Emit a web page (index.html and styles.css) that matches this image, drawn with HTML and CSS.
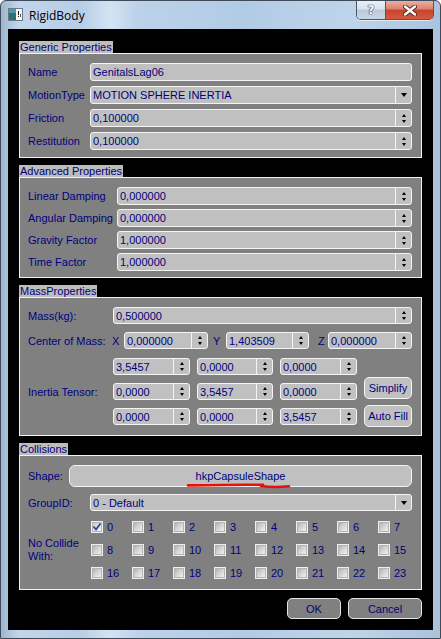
FILE: index.html
```html
<!DOCTYPE html>
<html lang="en">
<head>
  <meta charset="UTF-8">
  <title>RigidBody</title>
  <link rel="stylesheet" href="styles.css">
</head>
<body>
  <div class="window">
    <div class="titlebar">
      <svg class="app-icon" width="15" height="13" viewBox="0 0 15 13">
        <rect x="0.5" y="0.5" width="14" height="12" fill="#f4f6f8" stroke="#6d7884"/>
        <rect x="1" y="1" width="7" height="11" fill="#2f6f7a"/>
        <rect x="1" y="1" width="7" height="4" fill="#4f98a6"/>
        <rect x="10" y="3" width="1" height="4" fill="#222"/>
        <rect x="10" y="8" width="1" height="1" fill="#222"/>
        <rect x="12" y="6" width="1" height="3" fill="#555"/>
      </svg>
      <span class="caption">RigidBody</span>
      <div class="caption-buttons">
        <span class="cap-btn help">?</span>
        <span class="cap-btn close">
          <svg width="14" height="11" viewBox="0 0 14 11">
            <path d="M2 1.5 L12 9.5 M12 1.5 L2 9.5" stroke="#4a2620" stroke-width="4.2" stroke-linecap="round"/>
            <path d="M2 1.5 L12 9.5 M12 1.5 L2 9.5" stroke="#fff" stroke-width="2.4" stroke-linecap="round"/>
          </svg>
        </span>
      </div>
    </div>

    <div class="client">
      <!-- Generic -->
      <section class="group">
        <h4 class="group-title">Generic Properties</h4>
        <div class="group-box generic">
          <div class="row">
            <label>Name</label>
            <div class="field tall">GenitalsLag06</div>
          </div>
          <div class="row">
            <label>MotionType</label>
            <div class="field combo"><span class="val">MOTION SPHERE INERTIA</span><span class="drop"><i class="tri-down"></i></span></div>
          </div>
          <div class="row">
            <label>Friction</label>
            <div class="field spin"><span class="val">0,100000</span><span class="arrows"><i class="up"></i><i class="down"></i></span></div>
          </div>
          <div class="row">
            <label>Restitution</label>
            <div class="field spin"><span class="val">0,100000</span><span class="arrows"><i class="up"></i><i class="down"></i></span></div>
          </div>
        </div>
      </section>

      <!-- Advanced -->
      <section class="group">
        <h4 class="group-title">Advanced Properties</h4>
        <div class="group-box advanced">
          <div class="row">
            <label>Linear Damping</label>
            <div class="field spin"><span class="val">0,000000</span><span class="arrows"><i class="up"></i><i class="down"></i></span></div>
          </div>
          <div class="row">
            <label>Angular Damping</label>
            <div class="field spin"><span class="val">0,000000</span><span class="arrows"><i class="up"></i><i class="down"></i></span></div>
          </div>
          <div class="row">
            <label>Gravity Factor</label>
            <div class="field spin"><span class="val">1,000000</span><span class="arrows"><i class="up"></i><i class="down"></i></span></div>
          </div>
          <div class="row">
            <label>Time Factor</label>
            <div class="field spin"><span class="val">1,000000</span><span class="arrows"><i class="up"></i><i class="down"></i></span></div>
          </div>
        </div>
      </section>

      <!-- Mass -->
      <section class="group">
        <h4 class="group-title">MassProperties</h4>
        <div class="group-box mass">
          <div class="row mass-row">
            <label>Mass(kg):</label>
            <div class="field spin"><span class="val">0,500000</span><span class="arrows"><i class="up"></i><i class="down"></i></span></div>
          </div>
          <div class="row center-row">
            <label>Center of Mass:</label>
            <span class="axis ax-x">X</span>
            <div class="field spin w84"><span class="val">0,000000</span><span class="arrows"><i class="up"></i><i class="down"></i></span></div>
            <span class="axis ax-y">Y</span>
            <div class="field spin w83"><span class="val">1,403509</span><span class="arrows"><i class="up"></i><i class="down"></i></span></div>
            <span class="axis ax-z">Z</span>
            <div class="field spin w84"><span class="val">0,000000</span><span class="arrows"><i class="up"></i><i class="down"></i></span></div>
          </div>
          <div class="tensor">
            <label class="tensor-label">Inertia Tensor:</label>
            <div class="field spin"><span class="val">3,5457</span><span class="arrows"><i class="up"></i><i class="down"></i></span></div>
            <div class="field spin"><span class="val">0,0000</span><span class="arrows"><i class="up"></i><i class="down"></i></span></div>
            <div class="field spin"><span class="val">0,0000</span><span class="arrows"><i class="up"></i><i class="down"></i></span></div>
            <div class="field spin"><span class="val">0,0000</span><span class="arrows"><i class="up"></i><i class="down"></i></span></div>
            <div class="field spin"><span class="val">3,5457</span><span class="arrows"><i class="up"></i><i class="down"></i></span></div>
            <div class="field spin"><span class="val">0,0000</span><span class="arrows"><i class="up"></i><i class="down"></i></span></div>
            <div class="field spin"><span class="val">0,0000</span><span class="arrows"><i class="up"></i><i class="down"></i></span></div>
            <div class="field spin"><span class="val">0,0000</span><span class="arrows"><i class="up"></i><i class="down"></i></span></div>
            <div class="field spin"><span class="val">3,5457</span><span class="arrows"><i class="up"></i><i class="down"></i></span></div>
            <div class="tensor-buttons">
              <button class="btn light">Simplify</button>
              <button class="btn light">Auto Fill</button>
            </div>
          </div>
        </div>
      </section>

      <!-- Collisions -->
      <section class="group">
        <h4 class="group-title">Collisions</h4>
        <div class="group-box collisions">
          <div class="row shape-row">
            <label>Shape:</label>
            <button class="btn light shape-btn">hkpCapsuleShape
              <svg class="mark" width="230" height="28" viewBox="0 0 230 28">
                <path d="M119 20.4 C140 20 170 19.4 194 19.8" stroke="#e8100c" stroke-width="2.6" fill="none" stroke-linecap="round"/>
                <path d="M192 21 C200 22.2 210 22.4 220 21.3" stroke="#e8100c" stroke-width="2.6" fill="none" stroke-linecap="round"/>
              </svg>
            </button>
          </div>
          <div class="row group-row">
            <label>GroupID:</label>
            <div class="field combo"><span class="val">0 - Default</span><span class="drop"><i class="tri-down"></i></span></div>
          </div>
          <div class="checks">
            <label class="nc-label">No Collide<br>With:</label>
            <span class="chk"><i class="cb on"><svg width="10" height="10" viewBox="0 0 10 10"><path d="M1.5 4.5 L4 7.5 L8.5 1.5" stroke="#2748a8" stroke-width="1.8" fill="none"/></svg></i>0</span>
            <span class="chk"><i class="cb"></i>1</span>
            <span class="chk"><i class="cb"></i>2</span>
            <span class="chk"><i class="cb"></i>3</span>
            <span class="chk"><i class="cb"></i>4</span>
            <span class="chk"><i class="cb"></i>5</span>
            <span class="chk"><i class="cb"></i>6</span>
            <span class="chk"><i class="cb"></i>7</span>
            <span class="chk"><i class="cb"></i>8</span>
            <span class="chk"><i class="cb"></i>9</span>
            <span class="chk"><i class="cb"></i>10</span>
            <span class="chk"><i class="cb"></i>11</span>
            <span class="chk"><i class="cb"></i>12</span>
            <span class="chk"><i class="cb"></i>13</span>
            <span class="chk"><i class="cb"></i>14</span>
            <span class="chk"><i class="cb"></i>15</span>
            <span class="chk"><i class="cb"></i>16</span>
            <span class="chk"><i class="cb"></i>17</span>
            <span class="chk"><i class="cb"></i>18</span>
            <span class="chk"><i class="cb"></i>19</span>
            <span class="chk"><i class="cb"></i>20</span>
            <span class="chk"><i class="cb"></i>21</span>
            <span class="chk"><i class="cb"></i>22</span>
            <span class="chk"><i class="cb"></i>23</span>
          </div>
        </div>
      </section>

      <div class="dialog-buttons">
        <button class="btn dark ok">OK</button>
        <button class="btn dark cancel">Cancel</button>
      </div>
    </div>
  </div>
</body>
</html>
```

FILE: styles.css
```css
html, body {
  margin: 0;
  width: 441px;
  height: 639px;
  overflow: hidden;
  background: #fff;
}
body {
  font-family: "Liberation Sans", Arial, sans-serif;
  font-size: 11px;
  color: #000080;
}

/* window frame */
.window {
  box-sizing: border-box;
  width: 441px;
  height: 639px;
  border: 1px solid #3f4b5a;
  border-radius: 6px 6px 0 0;
  padding: 0 7px 8px;
  display: flex;
  flex-direction: column;
  background: linear-gradient(90deg, #9db6d0 0%, #c1d6ec 4%, #b6cde6 18%, #d3e3f3 25%, #bcd2ea 31%, #b2cbe5 55%, #bed4ea 80%, #aac2dc 100%);
}
.titlebar {
  height: 28px;
  display: flex;
  align-items: flex-start;
  flex-shrink: 0;
}
.app-icon {
  margin-top: 7px;
}
.caption {
  margin: 6px 0 0 6px;
  font-family: "Open Sans", "Liberation Sans", sans-serif;
  font-size: 12px;
  line-height: 17px;
  color: #000;
}
.caption-buttons {
  margin-left: auto;
  margin-right: -1px;
  display: flex;
  border: 1px solid #49586b;
  border-top: none;
  border-radius: 0 0 5px 5px;
  overflow: hidden;
  box-shadow: 0 1px 0 rgba(255,255,255,0.6);
}
.cap-btn {
  height: 18px;
  display: flex;
  align-items: center;
  justify-content: center;
}
.cap-btn.help {
  width: 28px;
  border-right: 1px solid #49586b;
  background: linear-gradient(#e9f0f7 0%, #d6e2ee 45%, #b9cadb 50%, #c9d7e5 100%);
  font-family: "DejaVu Sans", sans-serif;
  font-weight: bold;
  font-size: 12px;
  color: #fff;
  text-shadow: 0 0 1px #2a3340, 0 0 1px #2a3340, 0 0 1px #2a3340;
}
.cap-btn.close {
  width: 47px;
  background: linear-gradient(#eab0a2 0%, #dc7f6b 45%, #c8432c 50%, #d45a3f 100%);
}

/* client area */
.client {
  flex: 1;
  background: #000;
  padding: 12px 11px 11px;
  display: flex;
  flex-direction: column;
  gap: 7px;
}
.group-title {
  margin: 0;
  align-self: flex-start;
  font-size: 11px;
  font-weight: normal;
  line-height: 12px;
  height: 12px;
  padding: 0 1px;
  background: #bdbdbd;
  color: #00007a;
  display: inline-block;
}
.group {
  display: flex;
  flex-direction: column;
}
.group-box {
  box-sizing: border-box;
  background: #808080;
  border: 1px solid #f2f2f2;
  padding: 9px 9px 7px 8px;
  display: flex;
  flex-direction: column;
}
.generic { height: 105px; gap: 5px; }
.advanced { height: 101px; gap: 4px; }
.mass { height: 139px; }
.collisions { height: 135px; }

.row {
  display: flex;
  align-items: center;
}
.row label {
  flex-shrink: 0;
}
.generic .row label { width: 62px; }
.advanced .row label { width: 89px; }

/* line edits, spin boxes, combos */
.field {
  box-sizing: border-box;
  flex: 1;
  height: 17px;
  display: flex;
  align-items: center;
  background: #c0c0c0;
  border: 1px solid #f4f4f4;
  border-radius: 3px;
  padding-left: 2px;
  color: #00007a;
  white-space: nowrap;
  overflow: hidden;
}
.generic .field, .advanced .field { height: 18px; }
.field .val {
  flex: 1;
}
.arrows, .drop {
  align-self: stretch;
  width: 15px;
  border-left: 1px solid #f4f4f4;
  display: flex;
  flex-direction: column;
  align-items: center;
  justify-content: center;
  gap: 3px;
}
.arrows i, .drop i {
  display: block;
  width: 0;
  height: 0;
  border-left: 2.5px solid transparent;
  border-right: 2.5px solid transparent;
}
.arrows .up { border-bottom: 3px solid #000; }
.arrows .down { border-top: 3px solid #000; }
.drop .tri-down {
  border-left-width: 3.5px;
  border-right-width: 3.5px;
  border-top: 4px solid #000;
}

/* mass properties */
.mass-row label { width: 85px; }
.center-row { margin-top: 8px; }
.center-row label { width: 84px; }
.axis {
  flex-shrink: 0;
  box-sizing: border-box;
}
.ax-x { width: 12px; }
.ax-y { width: 18px; padding-left: 5px; }
.ax-z { width: 19px; padding-left: 9px; }
.field.w84 { flex: 0 0 84px; }
.field.w83 { flex: 0 0 83px; }

.tensor {
  margin-top: 9px;
  display: grid;
  grid-template-columns: 78px 77px 76px 77px 48px;
  grid-template-rows: 17px 17px 17px;
  column-gap: 7px;
  row-gap: 8px;
}
.tensor-label {
  grid-column: 1;
  grid-row: 2;
  align-self: center;
}
.tensor .field:nth-of-type(1), .tensor .field:nth-of-type(4), .tensor .field:nth-of-type(7) { grid-column: 2; }
.tensor-buttons {
  grid-column: 5;
  grid-row: 1 / 4;
  display: flex;
  flex-direction: column;
  justify-content: flex-end;
  gap: 6px;
  margin-bottom: -2px;
}
.tensor-buttons .btn { height: 22px; }

/* buttons */
.btn {
  box-sizing: border-box;
  font-family: inherit;
  font-size: 11px;
  color: #00007a;
  border-radius: 5px;
  padding: 0;
  white-space: nowrap;
  cursor: default;
}
.btn.light {
  background: #c0c0c0;
  border: 1px solid #f4f4f4;
}
.btn.dark {
  background: #808080;
  border: 1px solid #e4e4e4;
  height: 21px;
}

/* collisions */
.shape-row label { width: 41px; }
.shape-btn {
  position: relative;
  flex: 1;
  height: 22px;
  border-radius: 6px;
}
.shape-btn .mark {
  position: absolute;
  left: -1px;
  top: -1px;
  overflow: visible;
}
.group-row { margin-top: 7px; }
.group-row label { width: 62px; }

.checks {
  margin-top: 7px;
  display: grid;
  grid-template-columns: 62px repeat(7, 41px) 1fr;
  grid-template-rows: 18px 18px 18px;
  row-gap: 5px;
}
.nc-label {
  grid-column: 1;
  grid-row: 2;
  align-self: center;
  line-height: 13px;
}
.chk {
  display: flex;
  align-items: center;
  gap: 4px;
  padding-left: 1px;
}
.checks .chk:nth-of-type(8n+1) { grid-column: 2; }
.cb {
  box-sizing: border-box;
  width: 12px;
  height: 12px;
  border: 1px solid #efefef;
  background: linear-gradient(135deg, #a9a9a9 0%, #d2d2d2 45%, #f7f7f7 100%);
  box-shadow: inset 0 0 0 1px #b4b4b4;
  display: flex;
  align-items: center;
  justify-content: center;
}
.cb.on {
  background: linear-gradient(135deg, #bdbdbd 0%, #e4e4e4 50%, #fafafa 100%);
}

/* OK / Cancel */
.dialog-buttons {
  margin-top: 1px;
  display: flex;
  justify-content: flex-end;
  gap: 7px;
}
.ok { width: 54px; }
.cancel { width: 74px; }
```
